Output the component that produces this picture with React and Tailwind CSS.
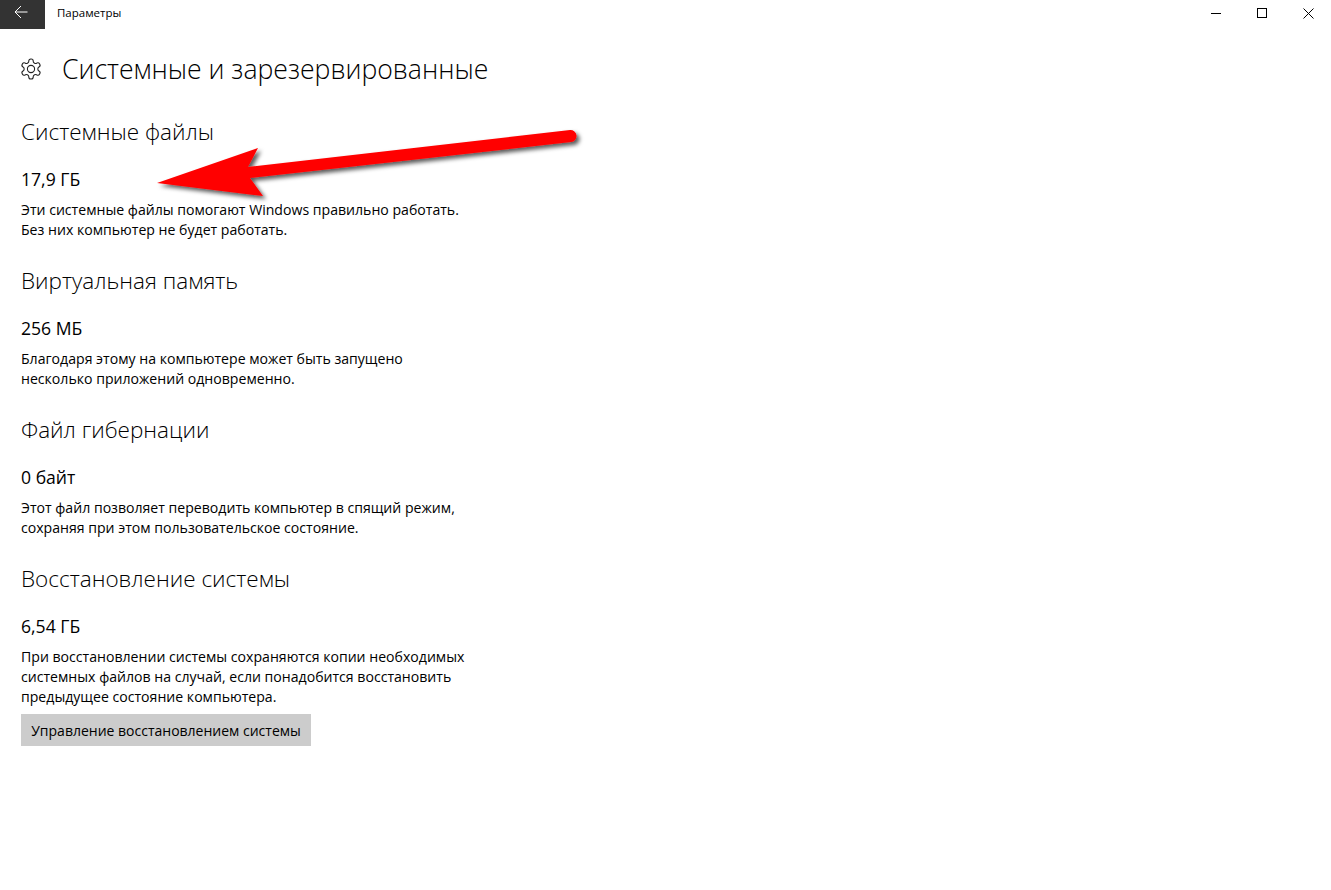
import React from 'react';

const sections = [
  {
    title: 'Системные файлы',
    size: '17,9 ГБ',
    lines: ['Эти системные файлы помогают Windows правильно работать.', 'Без них компьютер не будет работать.'],
  },
  {
    title: 'Виртуальная память',
    size: '256 МБ',
    lines: ['Благодаря этому на компьютере может быть запущено', 'несколько приложений одновременно.'],
  },
  {
    title: 'Файл гибернации',
    size: '0 байт',
    lines: ['Этот файл позволяет переводить компьютер в спящий режим,', 'сохраняя при этом пользовательское состояние.'],
  },
  {
    title: 'Восстановление системы',
    size: '6,54 ГБ',
    lines: [
      'При восстановлении системы сохраняются копии необходимых',
      'системных файлов на случай, если понадобится восстановить',
      'предыдущее состояние компьютера.',
    ],
  },
];

const Gear = () => (
  <svg width="24" height="24" viewBox="0 0 24 24" fill="none" stroke="#222" strokeWidth="1.1" strokeLinejoin="round">
    <path d="M12.22 2h-.44a2 2 0 0 0-2 2v.18a2 2 0 0 1-1 1.73l-.43.25a2 2 0 0 1-2 0l-.15-.08a2 2 0 0 0-2.73.73l-.22.38a2 2 0 0 0 .73 2.73l.15.1a2 2 0 0 1 1 1.72v.51a2 2 0 0 1-1 1.74l-.15.09a2 2 0 0 0-.73 2.73l.22.38a2 2 0 0 0 2.73.73l.15-.08a2 2 0 0 1 2 0l.43.25a2 2 0 0 1 1 1.73V20a2 2 0 0 0 2 2h.44a2 2 0 0 0 2-2v-.18a2 2 0 0 1 1-1.73l.43-.25a2 2 0 0 1 2 0l.15.08a2 2 0 0 0 2.73-.73l.22-.39a2 2 0 0 0-.73-2.73l-.15-.08a2 2 0 0 1-1-1.74v-.5a2 2 0 0 1 1-1.74l.15-.09a2 2 0 0 0 .73-2.73l-.22-.38a2 2 0 0 0-2.73-.73l-.15.08a2 2 0 0 1-2 0l-.43-.25a2 2 0 0 1-1-1.73V4a2 2 0 0 0-2-2z" />
    <circle cx="12" cy="12" r="3.6" />
  </svg>
);

const RedArrow = () => (
  <svg className="absolute left-[140px] top-[115px]" width="460" height="95" viewBox="0 0 460 95">
    <defs>
      <filter id="arrowShadow" x="-10%" y="-30%" width="120%" height="170%">
        <feDropShadow dx="3" dy="3" stdDeviation="2" floodColor="#000" floodOpacity="0.65" />
      </filter>
    </defs>
    <path
      d="M17 68 L118 33 L108 52 L430 15 A6 6 0 0 1 431 27 L110 63 L123 81 Z"
      fill="#ff0000"
      filter="url(#arrowShadow)"
    />
  </svg>
);

const App = () => {
  return (
    <div className="relative w-[1331px] h-[890px] bg-white text-black overflow-hidden font-['Open_Sans','Noto_Sans',sans-serif]">
      {/* title bar */}
      <div className="flex items-center h-[29px]">
        <div className="flex items-center justify-center w-[45px] h-[29px] pr-[3px] pb-[5px] bg-[#333333]">
          <svg width="14" height="14" viewBox="0 0 14 14" fill="none" stroke="#fff" strokeWidth="1">
            <path d="M1 7H13.5M7 1L1 7l6 6" />
          </svg>
        </div>
        <span className="ml-3 text-[11.5px] leading-none mb-[3px]">Параметры</span>
        <div className="flex ml-auto items-center mb-[3px]">
          <div className="flex justify-center w-[46px]">
            <div className="w-[10px] h-px bg-black" />
          </div>
          <div className="flex justify-center w-[46px]">
            <div className="w-[10px] h-[10px] border border-black" />
          </div>
          <div className="flex justify-center w-[46px]">
            <svg width="11" height="11" viewBox="0 0 11 11" stroke="#000" strokeWidth="1">
              <path d="M.5.5l10 10M10.5.5l-10 10" />
            </svg>
          </div>
        </div>
      </div>

      {/* page header */}
      <div className="flex items-center pl-[19px] mt-[18px] h-[44px]">
        <Gear />
        <h1 className="ml-[19px] text-[26.6px] font-light leading-none">Системные и зарезервированные</h1>
      </div>

      <div className="pl-[21px] mt-[26px] w-[480px]">
        {sections.map(s => (
          <section key={s.title} className="h-[149px]">
            <h2 className="text-[22.5px] font-light leading-[30px]">{s.title}</h2>
            <div className="mt-[20px] text-[17.6px] leading-[24px]">{s.size}</div>
            <p className="mt-[9px] text-[14.1px] leading-[20px]">
              {s.lines.map(l => (
                <span key={l} className="block whitespace-nowrap">{l}</span>
              ))}
            </p>
          </section>
        ))}
      </div>

      <button className="absolute left-[21px] top-[714px] w-[290px] h-[32px] bg-[#cccccc] text-[14px] text-black">
        Управление восстановлением системы
      </button>

      <RedArrow />
    </div>
  );
};

export default App;
